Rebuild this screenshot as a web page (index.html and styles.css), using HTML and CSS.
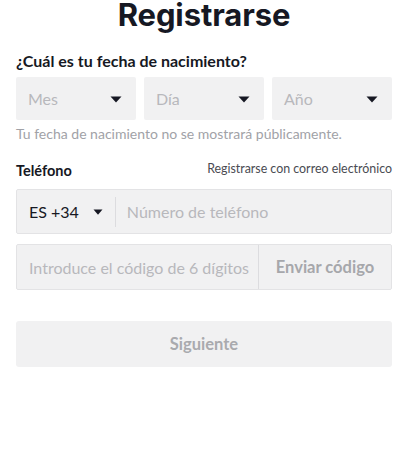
FILE: index.html
```html
<!DOCTYPE html>
<html lang="es">

<head>
    <meta charset="UTF-8">
    <meta name="viewport" content="width=device-width, initial-scale=1.0">
    <title>Registrarse</title>
    <link rel="stylesheet" href="styles.css">
</head>

<body>

    <div class="page">
        <h1 class="title">Registrarse</h1>

        <!-- fecha de nacimiento -->
        <div class="label">¿Cuál es tu fecha de nacimiento?</div>
        <div class="dates">
            <div class="sel">
                <span>Mes</span>
                <svg class="arrow" width="12" height="7" viewBox="0 0 12 7"><path d="M0.5 0.5h11L6 6.5z" fill="#161823" /></svg>
            </div>
            <div class="sel">
                <span>Día</span>
                <svg class="arrow" width="12" height="7" viewBox="0 0 12 7"><path d="M0.5 0.5h11L6 6.5z" fill="#161823" /></svg>
            </div>
            <div class="sel">
                <span>Año</span>
                <svg class="arrow" width="12" height="7" viewBox="0 0 12 7"><path d="M0.5 0.5h11L6 6.5z" fill="#161823" /></svg>
            </div>
        </div>
        <p class="hint">Tu fecha de nacimiento no se mostrará públicamente.</p>

        <!-- telefono -->
        <div class="phoneHead">
            <span class="label small">Teléfono</span>
            <a class="link">Registrarse con correo electrónico</a>
        </div>

        <div class="box">
            <div class="code">
                <span>ES +34</span>
                <svg width="10" height="6" viewBox="0 0 10 6"><path d="M0.5 0.5h9L5 5.8z" fill="#161823" /></svg>
            </div>
            <div class="line"></div>
            <input class="inp" type="text" placeholder="Número de teléfono">
        </div>

        <div class="box box2">
            <input class="inp inp2" type="text" placeholder="Introduce el código de 6 dígitos">
            <div class="send">Enviar código</div>
        </div>

        <button class="next">Siguiente</button>
    </div>

</body>

</html>
```

FILE: styles.css
```css
body {
    margin: 0;
    background: #fff;
    font-family: "Lato", "Noto Sans", sans-serif;
    color: #161823;
}

.page {
    padding: 0 16px;
    display: flex;
    flex-flow: column;
}

.title {
    margin: 0;
    text-align: center;
    font-family: "Inter", sans-serif;
    font-size: 31px;
    font-weight: 700;
    line-height: 30px;
    height: 30px;
    letter-spacing: -0.1px;
}

.label {
    margin-top: 22px;
    font-size: 16px;
    font-weight: 700;
    line-height: 18px;
}

.dates {
    margin-top: 7px;
    display: flex;
    gap: 8px;
}

.sel {
    flex: 1;
    height: 43px;
    background-color: #f1f1f2;
    border-radius: 2px;
    display: flex;
    align-items: center;
    justify-content: space-between;
    padding: 0 14px 0 12px;
    font-size: 16px;
    color: #b8b8bc;
}

.sel .arrow {
    margin-top: 1px;
}

.hint {
    margin: 6px 0 0;
    font-size: 14px;
    line-height: 16px;
    color: #a1a2a7;
}

.phoneHead {
    margin-top: 19px;
    display: flex;
    justify-content: space-between;
    align-items: center;
    height: 18px;
}

.phoneHead .label {
    margin-top: 2px;
    font-size: 14.5px;
}

.link {
    font-size: 12.4px;
    color: #4a4b52;
    margin-top: -4px;
}

.box {
    margin-top: 10px;
    height: 45px;
    background-color: #f1f1f2;
    border: 1px solid #e3e3e5;
    border-radius: 2px;
    display: flex;
    align-items: center;
    box-sizing: border-box;
}

.code {
    display: flex;
    align-items: center;
    gap: 14px;
    padding-left: 12px;
    font-size: 16px;
    color: #161823;
}

.line {
    width: 1px;
    height: 30px;
    background-color: #dcdcdf;
    margin: 0 11px 0 12px;
}

.inp {
    flex: 1;
    border: 0;
    outline: none;
    background: transparent;
    font-family: "Lato", "Noto Sans", sans-serif;
    font-size: 16px;
    padding: 0;
    color: #161823;
}

.inp::placeholder {
    color: #b8b8bc;
}

.box2 {
    margin-top: 10px;
    height: 46px;
}

.inp2 {
    padding-left: 12px;
    height: 100%;
}

.send {
    height: 100%;
    border-left: 1px solid #dcdcdf;
    width: 133px;
    box-sizing: border-box;
    display: flex;
    align-items: center;
    justify-content: center;
    font-size: 16.5px;
    font-weight: 700;
    color: #a6a7ab;
}

.next {
    margin-top: 31px;
    height: 46px;
    border: 0;
    border-radius: 3px;
    background-color: #f1f1f2;
    font-family: "Lato", "Noto Sans", sans-serif;
    font-size: 16.5px;
    font-weight: 700;
    color: #a9aaae;
}
```
